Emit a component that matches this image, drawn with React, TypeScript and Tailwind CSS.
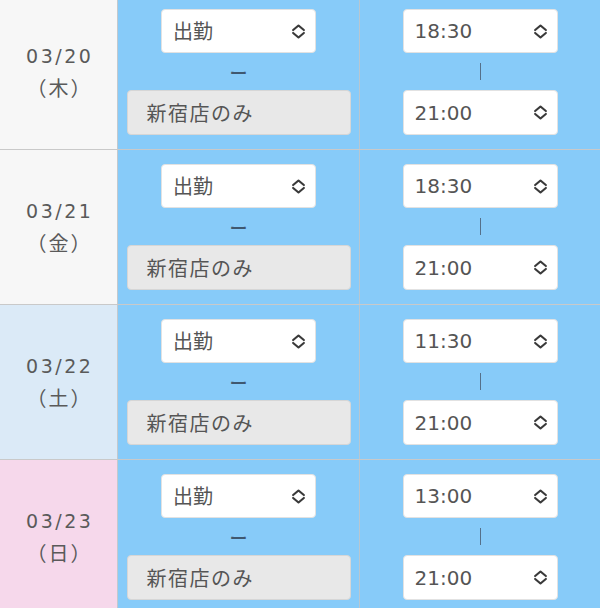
import React from "react";

const rows = [
  { date: "03/20", day: "木", bg: "bg-[#f7f7f7]", start: "18:30", end: "21:00" },
  { date: "03/21", day: "金", bg: "bg-[#f7f7f7]", start: "18:30", end: "21:00" },
  { date: "03/22", day: "土", bg: "bg-[#dbeaf7]", start: "11:30", end: "21:00" },
  { date: "03/23", day: "日", bg: "bg-[#f6d8eb]", start: "13:00", end: "21:00" },
];

function Chevrons() {
  return (
    <svg width="15" height="15" viewBox="0 0 14 14" fill="none" stroke="#3a3a3a" strokeWidth="2" strokeLinecap="round" strokeLinejoin="round">
      <path d="M2 5.6 L7 1.4 L12 5.6" />
      <path d="M2 8.4 L7 12.6 L12 8.4" />
    </svg>
  );
}

function Select({ value, h }: { value: string; h: string }) {
  return (
    <div className={`${h} flex w-[155px] items-center justify-between rounded-[4px] border border-[#e2e2e2] bg-white pl-[11px] pr-[9px] text-[20px] text-[#555]`}>
      <span>{value}</span>
      <Chevrons />
    </div>
  );
}

export default function App() {
  return (
    <div
      className="-mt-[5px] w-[600px] overflow-hidden bg-[#87cbf9]"
      style={{ fontFamily: '"DejaVu Sans", "Noto Sans CJK JP", sans-serif' }}
    >
      {rows.map((r) => (
        <div key={r.date} className="grid h-[155px] grid-cols-[117px_1px_241px_1px_240px] border-b border-[#c9c9c9]">
          <div className={`${r.bg} flex flex-col items-center justify-center text-[19px] text-[#5a5a5a]`}>
            <div className="leading-[32px] tracking-[2.5px] pl-[2.5px]">{r.date}</div>
            <div className="leading-[32px] text-[20px] tracking-[2px] pl-[2px]" style={{ fontFamily: '"Noto Sans CJK JP", sans-serif' }}>（{r.day}）</div>
          </div>
          <div className="bg-[#c3c9cd]" />
          <div className="flex flex-col items-center pt-[14px]">
            <div style={{ fontFamily: '"Noto Sans CJK JP", sans-serif' }}>
              <Select value="出勤" h="h-[44px]" />
            </div>
            <div className="flex h-[37px] items-center justify-center text-[18px] font-medium leading-none text-[#3f5870]" style={{ fontFamily: '"Noto Sans CJK JP", sans-serif' }}>
              ー
            </div>
            <div
              className="flex h-[45px] w-[224px] items-center rounded-[4px] border border-[#d6d6d6] bg-[#e8e8e8] pl-[19px] text-[20px] tracking-[1.5px] text-[#555]"
              style={{ fontFamily: '"Noto Sans CJK JP", sans-serif' }}
            >
              新宿店のみ
            </div>
          </div>
          <div className="bg-[#b9c6cf]" />
          <div className="flex flex-col items-center pt-[14px]">
            <Select value={r.start} h="h-[44px]" />
            <div className="flex h-[37px] items-center justify-center">
              <div className="h-[17px] w-[1px] bg-[#55708a]" />
            </div>
            <Select value={r.end} h="h-[45px]" />
          </div>
        </div>
      ))}
    </div>
  );
}
